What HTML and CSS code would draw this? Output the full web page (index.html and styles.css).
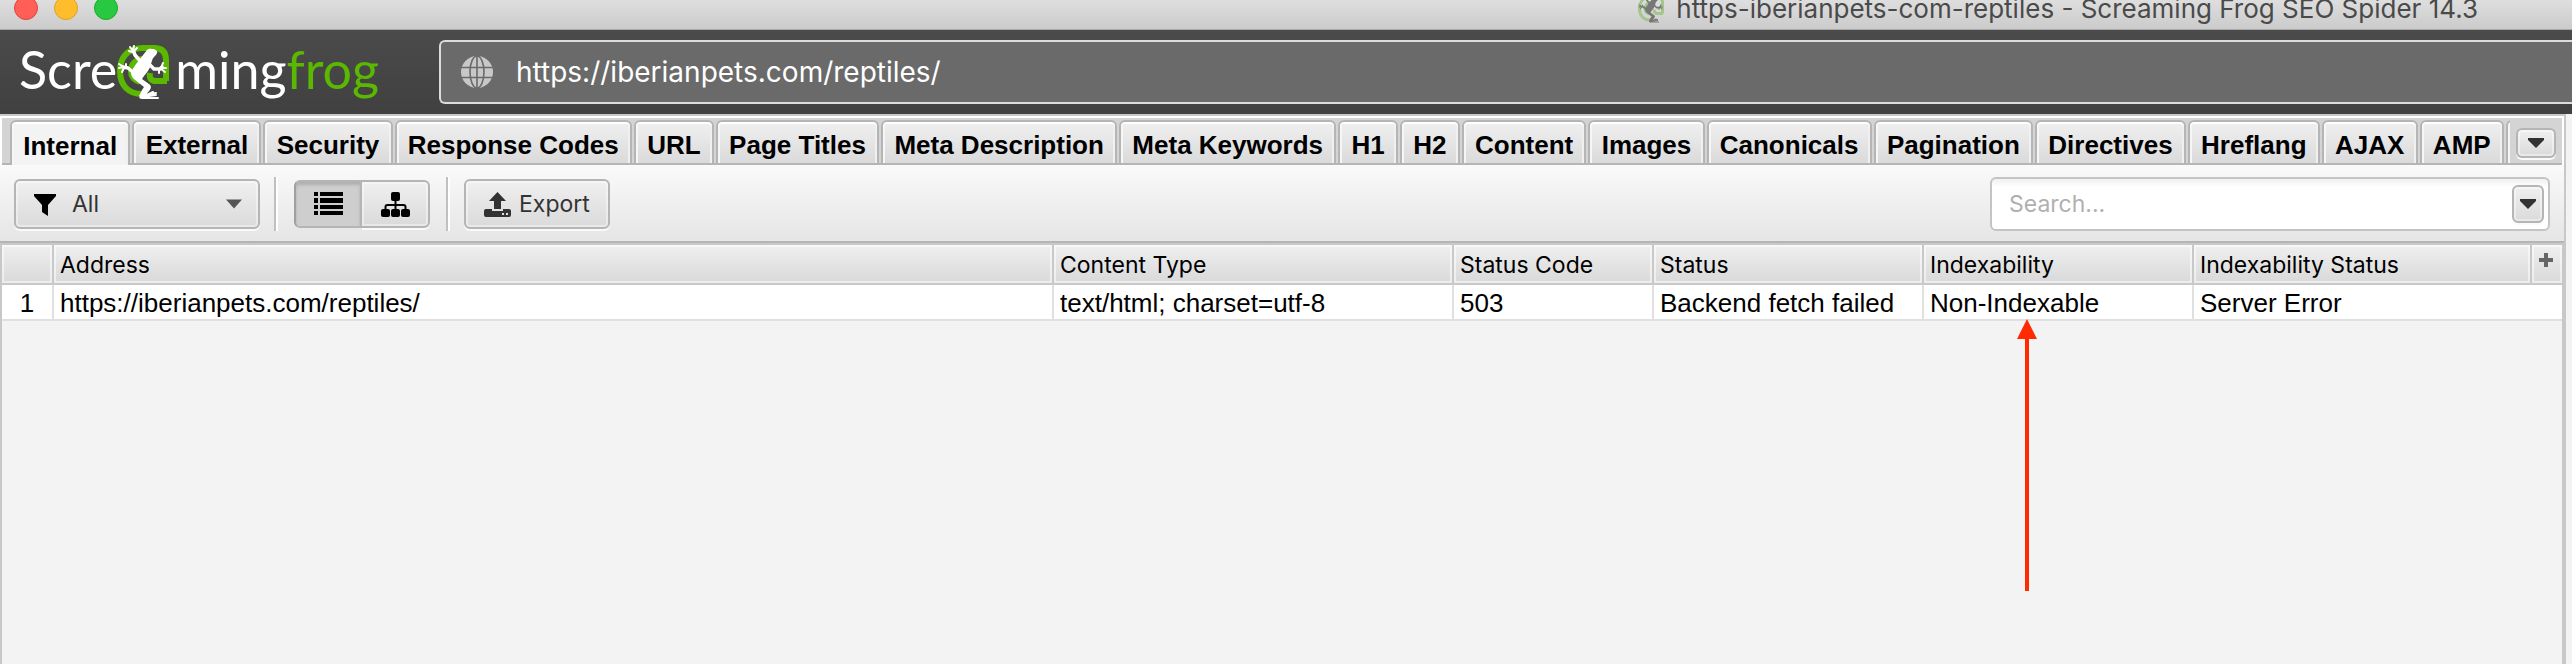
FILE: index.html
```
<!DOCTYPE html>
<html lang="en">
  <head>
    <meta charset="UTF-8" />
    <meta name="viewport" content="width=device-width, initial-scale=1.0" />
    <title>https-iberianpets-com-reptiles - Screaming Frog SEO Spider 14.3</title>
    <link rel="stylesheet" href="styles.css" />
  </head>
  <body>
    <svg width="0" height="0" class="defs" aria-hidden="true">
      <symbol id="frog" viewBox="0 0 54 56">
        <path class="frog-ring" d="M50 37H39c-5 0-7-3-6-8M25 50C11 50 3 41 3 27 3 12 12 4 26 4h11c8 0 12 4 12 12v21M23 38c-6-2-9-6-9-11 0-7 5-12 12-12" fill="none" stroke-width="6" />
        <path class="frog-body" d="M23 15l7-9c2-2 5-1 7-1l3 2c1 2-1 4-3 6-2 2-2 4-3 7-1 5-4 8-7 12l-2 3 7 5c3 2 2 5 0 7l-4 5h-6l3-6 2-3-9-7c-3-2-4-5-4-8l3-5c2-3 4-6 6-8z" />
        <g class="frog-limbs" fill="none" stroke-linecap="round" stroke-linejoin="round">
          <path d="M24 18l-6-7-2-5M17 29l-6-5-5-1M33 21l4 4 6 0 2-2M24 53l5-2" stroke-width="3.500" />
          <path d="M16 7l-3-4M16 6l1-4M16 8l4-4M15 8l-3-1M7 23l-5-3M6 23l-4 1M7 24l-2 4M9 23l0-3M44 24l2-5M44 24l5 0M44 25l4 3M42 26l0 3M24 53l12-4M25 54l16 0M25 53l14-2M30 51l6-3M34 50l5-1" stroke-width="2" />
        </g>
      </symbol>
    </svg>

    <div class="titlebar">
      <div class="lights">
        <button class="light close" aria-label="Close"></button>
        <button class="light minimize" aria-label="Minimize"></button>
        <button class="light zoom" aria-label="Zoom"></button>
      </div>
      <div class="window-title">
        <svg class="title-icon"><use href="#frog" /></svg>
        <span>https-iberianpets-com-reptiles - Screaming Frog SEO Spider 14.3</span>
      </div>
    </div>

    <header class="header">
      <div class="logo">
        <span>Scre</span>
        <svg class="logo-frog"><use href="#frog" /></svg>
        <span>ming</span><span class="green">frog</span>
      </div>
      <div class="url-box">
        <svg class="globe" viewBox="0 0 32 32">
          <circle cx="16" cy="16" r="16" fill="#c8c8c8" />
          <g fill="none" stroke="#6a6a6a" stroke-width="1.6">
            <ellipse cx="16" cy="16" rx="7" ry="16" />
            <path d="M16 0v32M0 11.500h32M0 21.500h32" />
          </g>
        </svg>
        <input type="text" class="url" aria-label="URL to crawl" value="https://iberianpets.com/reptiles/" />
      </div>
    </header>

    <main class="panel">
      <div class="tabs">
        <div class="tab-list" role="tablist">
          <button class="tab active" role="tab">Internal</button>
          <button class="tab" role="tab">External</button>
          <button class="tab" role="tab">Security</button>
          <button class="tab" role="tab">Response Codes</button>
          <button class="tab" role="tab">URL</button>
          <button class="tab" role="tab">Page Titles</button>
          <button class="tab" role="tab">Meta Description</button>
          <button class="tab" role="tab">Meta Keywords</button>
          <button class="tab" role="tab">H1</button>
          <button class="tab" role="tab">H2</button>
          <button class="tab" role="tab">Content</button>
          <button class="tab" role="tab">Images</button>
          <button class="tab" role="tab">Canonicals</button>
          <button class="tab" role="tab">Pagination</button>
          <button class="tab" role="tab">Directives</button>
          <button class="tab" role="tab">Hreflang</button>
          <button class="tab" role="tab">AJAX</button>
          <button class="tab" role="tab">AMP</button>
          <button class="tab next" role="tab" aria-label="Next tab"></button>
        </div>
        <button class="btn more" aria-label="More tabs">
          <svg class="caret" viewBox="0 0 16 10"><path d="M0 0h16v2l-8 8-8-8z" /></svg>
        </button>
      </div>

      <div class="toolbar">
        <div class="filter">
          <svg class="funnel" viewBox="0 0 22 22"><path d="M0 0h22v2l-8 9v11l-6-4v-7L0 2z" /></svg>
          <select class="btn" aria-label="Filter">
            <option>All</option>
          </select>
          <svg class="caret" viewBox="0 0 16 9"><path d="M0 0h16l-8 9z" /></svg>
        </div>
        <div class="separator"></div>
        <div class="view-switch">
          <button class="btn pressed" aria-label="List view">
            <svg width="29" height="24" viewBox="0 0 29 24">
              <path d="M0 0h4v4H0zM6 0h23v4H6zM0 6h4v5H0zM6 6h23v5H6zM0 13h4v4H0zM6 13h23v4H6zM0 19h4v4H0zM6 19h23v4H6z" />
            </svg>
          </button>
          <button class="btn" aria-label="Tree view">
            <svg width="29" height="25" viewBox="0 0 29 25">
              <rect x="10" width="9" height="9" rx="2" />
              <rect y="17" width="9" height="8" rx="2" />
              <rect x="10" y="17" width="9" height="8" rx="2" />
              <rect x="20" y="17" width="9" height="8" rx="2" />
              <path d="M14.500 8v10M4.500 18v-3q0-2 2-2h16q2 0 2 2v3" fill="none" stroke="#000" stroke-width="2" />
            </svg>
          </button>
        </div>
        <div class="separator"></div>
        <button class="btn export">
          <svg width="27" height="25" viewBox="0 0 27 25">
            <path d="M13.500 0L22 9h-5v8h-7V9H5z" />
            <path fill-rule="evenodd" d="M2 17h6v2h11v-2h6q2 0 2 2v4q0 2-2 2H2q-2 0-2-2v-4q0-2 2-2zM18 21v2h2v-2zM22 21v2h2v-2z" />
          </svg>
          Export
        </button>
        <div class="search">
          <input type="text" placeholder="Search..." aria-label="Search" />
          <button class="btn" aria-label="Search options">
            <svg class="caret" viewBox="0 0 16 10"><path d="M0 0h16v2l-8 8-8-8z" /></svg>
          </button>
        </div>
      </div>

      <div class="results">
        <table>
          <colgroup>
            <col class="col-num" />
            <col class="col-address" />
            <col class="col-type" />
            <col class="col-code" />
            <col class="col-status" />
            <col class="col-status" />
            <col />
            <col class="col-add" />
          </colgroup>
          <thead>
            <tr>
              <th></th>
              <th>Address</th>
              <th>Content Type</th>
              <th>Status Code</th>
              <th>Status</th>
              <th>Indexability</th>
              <th>Indexability Status</th>
              <th class="add-cell">
                <button class="add" aria-label="Add column">
                  <svg width="14" height="14" viewBox="0 0 14 14"><path d="M5 0h4v5h5v4H9v5H5V9H0V5h5z" /></svg>
                </button>
              </th>
            </tr>
          </thead>
          <tbody>
            <tr>
              <td class="num">1</td>
              <td>https://iberianpets.com/reptiles/</td>
              <td>text/html; charset=utf-8</td>
              <td>503</td>
              <td>Backend fetch failed</td>
              <td class="marked">
                Non-Indexable
                <svg class="arrow" viewBox="0 0 20 272"><path d="M10 0l10 20h-8v252H8V20H0z" /></svg>
              </td>
              <td colspan="2">Server Error</td>
            </tr>
          </tbody>
        </table>
      </div>
    </main>
  </body>
</html>
```

FILE: styles.css
```
* {
  box-sizing: border-box;
  margin: 0;
  padding: 0;
}
body {
  display: flex;
  flex-direction: column;
  min-height: 100vh;
  background-color: #f3f3f3;
  font-family: 'Liberation Sans', Arial, sans-serif;
  font-size: 26px;
  color: #000;
  overflow: hidden;
}
button,
input,
select {
  font: inherit;
  color: inherit;
}
svg {
  flex: none;
}
.defs {
  position: absolute;
}

/* title bar */
.titlebar {
  display: flex;
  align-items: flex-end;
  justify-content: space-between;
  height: 30px;
  padding: 0 94px 0 14px;
  background: linear-gradient(#dedede, #cbcbcb);
  border-bottom: 1px solid #a8a8a8;
  overflow: hidden;
}
.lights {
  display: flex;
  gap: 16px;
  padding-bottom: 9px;
}
.light {
  width: 24px;
  height: 24px;
  border: 1px solid #e0443e;
  border-radius: 50%;
  background-color: #ff5f57;
}
.light.minimize {
  border-color: #dea123;
  background-color: #ffbd2e;
}
.light.zoom {
  border-color: #1aab29;
  background-color: #28c840;
}
.window-title {
  display: flex;
  align-items: center;
  gap: 11px;
  padding-bottom: 6px;
  font-family: Inter, sans-serif;
  font-size: 26px;
  line-height: 28px;
  color: #4a4a4a;
}
.title-icon {
  --ring: #a3c68b;
  --body: #777;
  width: 27px;
  height: 28px;
}
.frog-ring {
  stroke: var(--ring, #5ab800);
}
.frog-body {
  fill: var(--body, #fff);
}
.frog-limbs {
  stroke: var(--body, #fff);
}

/* header */
.header {
  display: flex;
  align-items: center;
  height: 84px;
  background: linear-gradient(#4b4b4b, #404040);
}
.logo {
  display: flex;
  align-items: center;
  width: 439px;
  padding: 0 0 6px 19px;
  font-family: Lato, sans-serif;
  font-size: 52px;
  line-height: 72px;
  color: #fff;
}
.logo-frog {
  width: 54px;
  height: 56px;
  margin: 6px 4px 0 0;
}
.green {
  color: #5ab800;
}
.url-box {
  display: flex;
  align-items: center;
  flex: 1;
  gap: 23px;
  height: 64px;
  padding-left: 20px;
  border: 2px solid #dcdcdc;
  border-right: none;
  border-radius: 6px 0 0 6px;
  background-color: #6a6a6a;
}
.globe {
  width: 32px;
  height: 32px;
}
.url {
  flex: 1;
  border: none;
  outline: none;
  background: none;
  font-family: Inter, sans-serif;
  font-size: 28px;
  color: #fff;
}

/* panel */
.panel {
  display: flex;
  flex: 1;
  flex-direction: column;
  margin-right: 6px;
  border-top: 2px solid #c8c8c8;
  border-right: 2px solid #c8c8c8;
}
.btn {
  display: flex;
  align-items: center;
  justify-content: center;
  border: 2px solid #b5b5b5;
  border-radius: 6px;
  background: linear-gradient(#f0f0f0, #dadada);
  box-shadow: inset 0 0 0 2px rgba(255, 255, 255, 0.4), 0 2px 0 #fafafa;
}
.caret {
  width: 16px;
  height: 10px;
  fill: #333;
}

/* tabs */
.tabs {
  display: flex;
  height: 49px;
  border: 2px solid #fff;
  border-bottom: none;
  background: linear-gradient(#b5b5b5, #b5b5b5) bottom / 100% 2px no-repeat #d4d4d4;
}
.tab-list {
  display: flex;
  flex: 1;
  gap: 2px;
  min-width: 0;
  padding: 2px 0 0 8px;
  overflow: hidden;
}
.tab {
  flex: 1 0 auto;
  height: 45px;
  padding: 5px 11px 0;
  border: 2px solid #b5b5b5;
  border-radius: 6px 6px 0 0;
  background: linear-gradient(#f0f0f0, #dadada);
  box-shadow: inset 0 2px 0 #fff, inset 2px 0 0 #f6f6f6, inset -2px 0 0 #f0f0f0;
  font-weight: bold;
}
.tab.active {
  border-bottom: none;
  background: #f3f3f3;
}
/* only the left edge of the next tab shows before the menu button */
.tab.next {
  flex: none;
  width: 40px;
  margin-right: -36px;
}
.more {
  width: 40px;
  height: 30px;
  margin: 10px 6px 0;
}

/* toolbar */
.toolbar {
  display: flex;
  align-items: center;
  gap: 14px;
  height: 78px;
  padding: 2px 14px 0;
  border-bottom: 2px solid #b5b5b5;
  background: linear-gradient(#fafafa, #e5e5e5);
  font-family: Inter, sans-serif;
  font-size: 23px;
  color: #333;
}
.toolbar .btn {
  height: 50px;
}
.filter {
  position: relative;
}
.filter select {
  width: 246px;
  padding-left: 56px;
  appearance: none;
}
.filter svg {
  position: absolute;
  top: 20px;
  right: 18px;
  pointer-events: none;
}
.filter .funnel {
  top: 15px;
  left: 20px;
  width: 22px;
  height: 22px;
}
.filter .caret {
  fill: #555;
}
.separator {
  width: 4px;
  height: 54px;
  border-left: 2px solid #c0c0c0;
  border-right: 2px solid #fff;
}
.view-switch {
  display: flex;
  margin: 0 2px;
}
.view-switch .btn {
  width: 68px;
  height: 48px;
  border-left: none;
  border-radius: 0 6px 6px 0;
}
.view-switch .pressed {
  border-left: 2px solid #a0a0a0;
  border-radius: 6px 0 0 6px;
  background: #cecece;
  box-shadow: inset 0 3px 3px rgba(0, 0, 0, 0.15);
}
.export {
  gap: 8px;
  padding: 0 18px;
}
.export svg {
  fill: #333;
}
.search {
  display: flex;
  align-items: center;
  width: 560px;
  height: 54px;
  margin-left: auto;
  padding: 0 4px 0 17px;
  border: 2px solid #c4c4c4;
  border-radius: 6px;
  background: linear-gradient(#f0f0f0, #fff 8px);
}
.search input {
  flex: 1;
  min-width: 0;
  border: none;
  outline: none;
  background: none;
}
.search input::placeholder {
  color: #b0b0b0;
}
.search .btn {
  width: 32px;
  height: 38px;
}

/* table */
.results {
  flex: 1;
  border: 2px solid #c8c8c8;
  border-bottom: none;
}
table {
  width: 100%;
  border-collapse: separate;
  border-spacing: 0;
  table-layout: fixed;
}
.col-num {
  width: 52px;
}
.col-address {
  width: 1000px;
}
.col-type {
  width: 400px;
}
.col-code {
  width: 200px;
}
.col-status {
  width: 270px;
}
.col-add {
  width: 30px;
}
th,
td {
  padding: 2px 0 0 6px;
  border-right: 2px solid #e0e0e0;
  text-align: left;
  white-space: nowrap;
}
th {
  height: 40px;
  border-right-color: #c8c8c8;
  border-bottom: 2px solid #c8c8c8;
  background: linear-gradient(#efefef, #d9d9d9);
  box-shadow: inset 0 0 0 2px rgba(255, 255, 255, 0.5);
  font-family: Inter, sans-serif;
  font-size: 23px;
  font-weight: normal;
}
td {
  height: 36px;
  border-bottom: 2px solid #e0e0e0;
  background-color: #fff;
}
th:last-child,
td:last-child {
  border-right: none;
}
.num {
  padding-left: 0;
  text-align: center;
}
.add-cell {
  padding: 0;
}
.add {
  display: flex;
  width: 100%;
  padding: 0 0 8px 7px;
  border: none;
  background: none;
  fill: #666;
}
.marked {
  position: relative;
}
.arrow {
  position: absolute;
  top: 100%;
  left: 93px;
  width: 20px;
  height: 272px;
  fill: #ff2a00;
}
```
